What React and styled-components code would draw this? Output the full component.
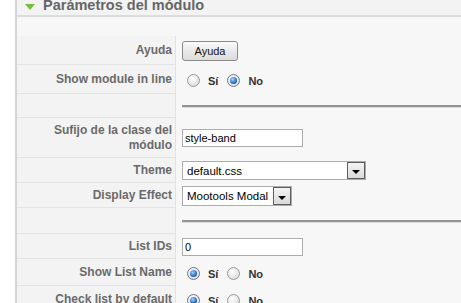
import React from "react";
import styled, { createGlobalStyle, css } from "styled-components";

const Global = createGlobalStyle`
  html, body {
    margin: 0;
    padding: 0;
    background: #ffffff;
    font-family: "Liberation Sans", Arial, sans-serif;
    overflow: hidden;
  }
`;

const Panel = styled.section`
  margin-left: 15px;
  border-left: 2px solid #d4d4d4;
  background: #f7f7f7;
  height: 303px;
`;

const Header = styled.h3`
  margin: 0;
  height: 15px;
  display: flex;
  align-items: flex-start;
  gap: 8px;
  padding-left: 8px;
  background: #f3f3f3;
  border-bottom: 2px solid #dcdcdc;
  font-size: 14.5px;
  line-height: 11px;
  font-weight: bold;
  color: #666;
`;

const Arrow = styled.span`
  width: 0;
  height: 0;
  margin-top: 4px;
  border-left: 5px solid transparent;
  border-right: 5px solid transparent;
  border-top: 6px solid #78c03a;
`;

const Table = styled.div`
  margin-top: 19px;
  display: grid;
  grid-template-columns: 159px 1fr;
`;

const Row = styled.div`
  display: contents;
  & > * {
    height: ${(p) => p.$h}px;
    box-sizing: border-box;
  }
`;

const Label = styled.div`
  background: #f3f3f3;
  border-right: 1px solid #e2e2e2;
  border-bottom: 1px solid #e4e4e4;
  display: flex;
  align-items: center;
  justify-content: flex-end;
  text-align: right;
  padding: 0 3px 0 30px;
  font-size: 12px;
  line-height: 15px;
  font-weight: bold;
  color: #6a6a6a;
`;

const Value = styled.div`
  display: flex;
  align-items: center;
  padding-left: 6px;
  font-size: 11px;
  color: #222;
`;

const Button = styled.button`
  height: 20px;
  width: 56px;
  padding: 0;
  border: 1px solid #8a8a8a;
  border-radius: 3px;
  background: linear-gradient(#fcfcfc, #e9e9e9 50%, #dcdcdc);
  font-family: "Liberation Sans", Arial, sans-serif;
  font-size: 11px;
  color: #111;
`;

const RadioGroup = styled.div`
  display: flex;
  align-items: center;
  padding-left: 5px;
  padding-top: 2px;
`;

const Radio = styled.span`
  position: relative;
  width: 13px;
  height: 13px;
  box-sizing: border-box;
  border-radius: 50%;
  border: 1px solid #9a9a9a;
  background: radial-gradient(circle at 40% 35%, #ffffff, #e4e4e4 60%, #cfcfcf);
  ${(p) =>
    p.$checked &&
    css`
      border-color: #6f7a86;
      &::after {
        content: "";
        position: absolute;
        inset: 2px;
        border-radius: 50%;
        background: radial-gradient(circle at 40% 35%, #a9d4ff, #2f74c8 55%, #0d3e85);
      }
    `}
`;

const RadioText = styled.span`
  font-weight: bold;
  color: #333;
  font-size: 11px;
  margin: 0 9px 0 8px;
`;

const Rule = styled.div`
  flex: 1;
  height: 2px;
  background: #939393;
  border-bottom: 1px solid #dadada;
`;

const TextInput = styled.div`
  width: 121px;
  height: 18px;
  box-sizing: border-box;
  border: 1px solid #acacac;
  background: #fff;
  padding-left: 2px;
  line-height: 16px;
  font-size: 11px;
  color: #000;
`;

const Select = styled.div`
  width: ${(p) => p.$w}px;
  height: ${(p) => p.$hh}px;
  box-sizing: border-box;
  border: 1px solid #acacac;
  background: #fff;
  display: flex;
  align-items: center;
  justify-content: space-between;
  padding-left: 4px;
  font-size: 11.5px;
  color: #000;
`;

const DropButton = styled.span`
  width: 18px;
  height: 100%;
  box-sizing: border-box;
  border: 1px solid #5c5c5c;
  background: linear-gradient(#f4f4f4, #dadada);
  display: flex;
  align-items: flex-end;
  justify-content: center;
  padding-bottom: 4px;

  &::before {
    content: "";
    border-left: 4px solid transparent;
    border-right: 4px solid transparent;
    border-top: 4px solid #000;
  }
`;

const RadioSet = ({ value }) => (
  <RadioGroup>
    <Radio $checked={value === "si"} />
    <RadioText>Sí</RadioText>
    <Radio $checked={value === "no"} />
    <RadioText>No</RadioText>
  </RadioGroup>
);

export default function App() {
  return (
    <>
      <Global />
      <Panel>
        <Header>
          <Arrow />
          Parámetros del módulo
        </Header>
        <Table>
          <Row $h={29}>
            <Label>Ayuda</Label>
            <Value>
              <Button>Ayuda</Button>
            </Value>
          </Row>
          <Row $h={29}>
            <Label>Show module in line</Label>
            <Value>
              <RadioSet value="no" />
            </Value>
          </Row>
          <Row $h={24}>
            <Label />
            <Value>
              <Rule />
            </Value>
          </Row>
          <Row $h={40}>
            <Label>Sufijo de la clase del módulo</Label>
            <Value>
              <TextInput>style-band</TextInput>
            </Value>
          </Row>
          <Row $h={25}>
            <Label>Theme</Label>
            <Value>
              <Select $w={184} $hh={19}>
                default.css
                <DropButton />
              </Select>
            </Value>
          </Row>
          <Row $h={25}>
            <Label>Display Effect</Label>
            <Value>
              <Select $w={110} $hh={20}>
                Mootools Modal
                <DropButton />
              </Select>
            </Value>
          </Row>
          <Row $h={26}>
            <Label />
            <Value>
              <Rule />
            </Value>
          </Row>
          <Row $h={25}>
            <Label>List IDs</Label>
            <Value>
              <TextInput>0</TextInput>
            </Value>
          </Row>
          <Row $h={27}>
            <Label>Show List Name</Label>
            <Value>
              <RadioSet value="si" />
            </Value>
          </Row>
          <Row $h={27}>
            <Label>Check list by default</Label>
            <Value>
              <RadioSet value="si" />
            </Value>
          </Row>
        </Table>
      </Panel>
    </>
  );
}
